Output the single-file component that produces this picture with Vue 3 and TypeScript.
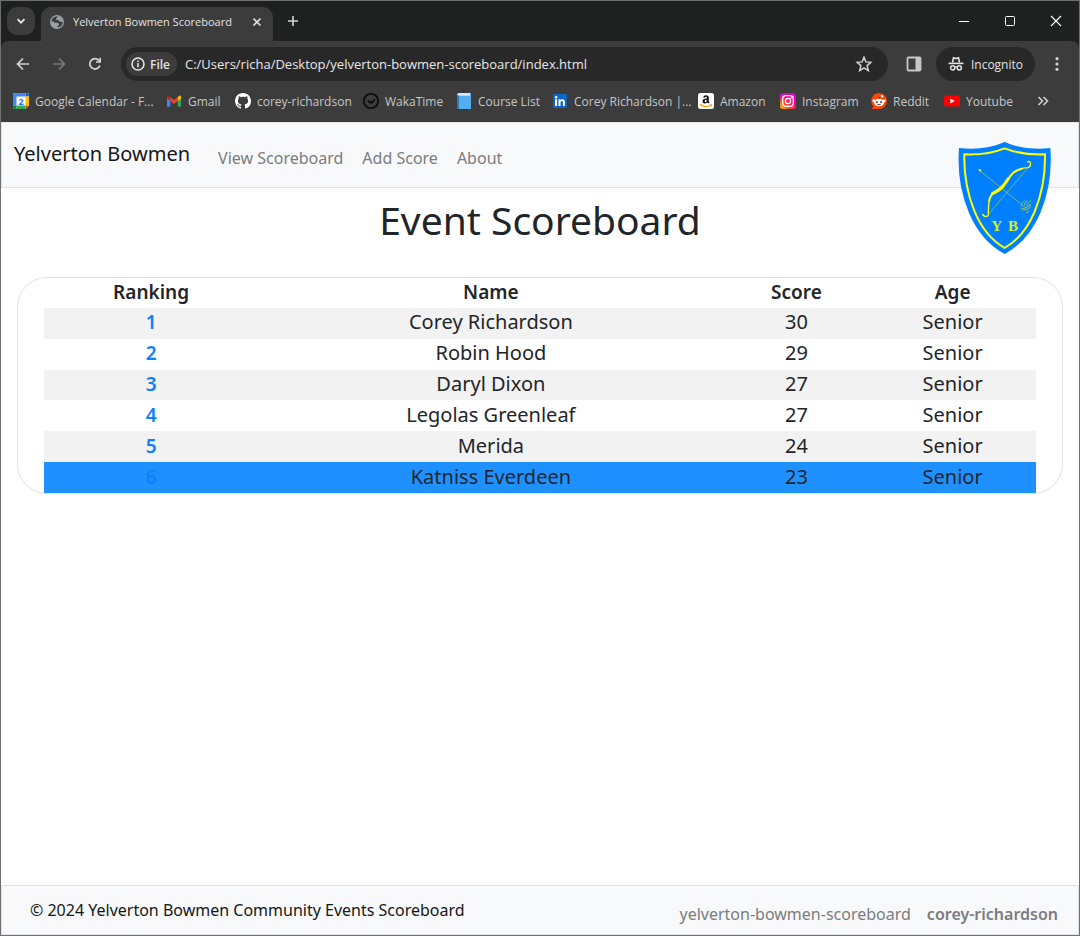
<script setup lang="ts">
import { ref } from 'vue'

interface Bookmark {
  icon: string
  label: string
}

interface Archer {
  name: string
  score: number
  age: string
}

const address = ref('C:/Users/richa/Desktop/yelverton-bowmen-scoreboard/index.html')

const bookmarks: Bookmark[] = [
  { icon: 'calendar', label: 'Google Calendar - F...' },
  { icon: 'gmail', label: 'Gmail' },
  { icon: 'github', label: 'corey-richardson' },
  { icon: 'wakatime', label: 'WakaTime' },
  { icon: 'book', label: 'Course List' },
  { icon: 'linkedin', label: 'Corey Richardson |...' },
  { icon: 'amazon', label: 'Amazon' },
  { icon: 'instagram', label: 'Instagram' },
  { icon: 'reddit', label: 'Reddit' },
  { icon: 'youtube', label: 'Youtube' },
]

const navLinks = ['View Scoreboard', 'Add Score', 'About']

const archers: Archer[] = [
  { name: 'Corey Richardson', score: 30, age: 'Senior' },
  { name: 'Robin Hood', score: 29, age: 'Senior' },
  { name: 'Daryl Dixon', score: 27, age: 'Senior' },
  { name: 'Legolas Greenleaf', score: 27, age: 'Senior' },
  { name: 'Merida', score: 24, age: 'Senior' },
  { name: 'Katniss Everdeen', score: 23, age: 'Senior' },
]
</script>

<template>
  <div class="window">
    <div class="titlebar">
      <button class="tab-search" aria-label="Search tabs">
        <svg width="16" height="16" viewBox="0 0 16 16"><path d="M4.5 6.2 8 9.7l3.500-3.500" fill="none" stroke="#e3e3e3" stroke-width="1.800" /></svg>
      </button>
      <div class="tab">
        <svg width="16" height="16" viewBox="0 0 16 16">
          <circle cx="8" cy="8" r="7" fill="#9aa0a6" />
          <path d="M9 2.600 7.200 4.300v1.600h2.200l1.400 1.800h2.900q.2 3.800-3.500 5.400l-1.700.2v-1.700H10V9.800L8.300 8.700H5.600L4.400 7.500H2.500Q2.700 3.400 6.800 2.500z" fill="#3c3c3c" />
          <path d="M2.600 8.800h2l1.800 1.500v1.500l1.300 1.500q-4-.4-5.100-4.500zM9.300 3l2 .9.900 1.500-2.400.3-1.300-1z" fill="#9aa0a6" />
        </svg>
        <span class="tab-title">Yelverton Bowmen Scoreboard</span>
        <button class="icon-button tab-close" aria-label="Close tab">
          <svg width="16" height="16" viewBox="0 0 16 16"><path d="m4.500 4.500 7 7m0-7-7 7" stroke="#e3e3e3" stroke-width="1.600" /></svg>
        </button>
      </div>
      <button class="icon-button new-tab" aria-label="New tab">
        <svg width="16" height="16" viewBox="0 0 16 16"><path d="M8 3v10M3 8h10" stroke="#d6d6d6" stroke-width="1.600" /></svg>
      </button>
      <div class="window-controls">
        <button class="icon-button" aria-label="Minimize">
          <svg width="12" height="12" viewBox="0 0 12 12"><path d="M1 6.500h10" stroke="#fff" /></svg>
        </button>
        <button class="icon-button" aria-label="Maximize">
          <svg width="12" height="12" viewBox="0 0 12 12"><rect x="1.500" y="1.500" width="9" height="9" rx="1" fill="none" stroke="#fff" /></svg>
        </button>
        <button class="icon-button" aria-label="Close window">
          <svg width="12" height="12" viewBox="0 0 12 12"><path d="m1 1 10 10M11 1 1 11" stroke="#fff" stroke-width="1.200" /></svg>
        </button>
      </div>
    </div>

    <div class="chrome-panel">
      <div class="toolbar">
        <div class="history">
          <button class="icon-button" aria-label="Back">
            <svg width="16" height="16" viewBox="0 0 16 16"><path d="M14 8H3M8 2.500 2.500 8 8 13.500" fill="none" stroke="#d2d2d2" stroke-width="1.700" /></svg>
          </button>
          <button class="icon-button" aria-label="Forward">
            <svg width="16" height="16" viewBox="0 0 16 16"><path d="M2 8h11M8 2.500 13.500 8 8 13.500" fill="none" stroke="#777" stroke-width="1.700" /></svg>
          </button>
          <button class="icon-button" aria-label="Reload">
            <svg width="16" height="16" viewBox="0 0 16 16"><path d="M12.900 9.500A5.200 5.200 0 1 1 12 4.500l1.200 1.400" fill="none" stroke="#d2d2d2" stroke-width="1.800" /><path d="M14 1.800v5H9V5.200h3.300V1.800z" fill="#d2d2d2" /></svg>
          </button>
        </div>
        <div class="omnibox">
          <button class="file-chip">
            <svg width="16" height="16" viewBox="0 0 16 16"><circle cx="8" cy="8" r="6" fill="none" stroke="#e8e8e8" stroke-width="1.500" /><path d="M8 7v4.200M8 4.500v1.600" stroke="#e8e8e8" stroke-width="1.500" /></svg>
            File
          </button>
          <input v-model="address" class="address" type="text" aria-label="Address" />
          <button class="icon-button" aria-label="Bookmark this page">
            <svg width="18" height="18" viewBox="0 0 18 18"><path d="m9 2.200 1.900 4.700 5 .4-3.800 3.300 1.200 5L9 12.900l-4.300 2.700 1.200-5-3.800-3.300 5-.4z" fill="none" stroke="#d2d2d2" stroke-width="1.500" /></svg>
          </button>
        </div>
        <button class="icon-button side-panel" aria-label="Side panel">
          <svg width="16" height="16" viewBox="0 0 16 16"><rect x="1.500" y="1.500" width="13" height="13" rx="1" fill="none" stroke="#c7c7c7" stroke-width="1.800" /><path d="M9.500 1.500h5v13h-5z" fill="#c7c7c7" /></svg>
        </button>
        <button class="incognito">
          <svg width="16" height="16" viewBox="0 0 16 16">
            <path d="M4.500 6.500 5.500 1.800 8 2.600l2.500-.8 1 4.700" fill="none" stroke="#e3e3e3" stroke-width="1.600" />
            <path d="M.5 7.400h15" stroke="#e3e3e3" stroke-width="1.600" />
            <circle cx="4.700" cy="11.800" r="2.100" fill="none" stroke="#e3e3e3" stroke-width="1.500" />
            <circle cx="11.300" cy="11.800" r="2.100" fill="none" stroke="#e3e3e3" stroke-width="1.500" />
            <path d="M6.500 11.300q1.500-.8 3 0" fill="none" stroke="#e3e3e3" stroke-width="1.300" />
          </svg>
          Incognito
        </button>
        <button class="icon-button menu" aria-label="Menu">
          <svg width="16" height="16" viewBox="0 0 16 16" fill="#d2d2d2"><circle cx="8" cy="2.700" r="1.600" /><circle cx="8" cy="8" r="1.600" /><circle cx="8" cy="13.300" r="1.600" /></svg>
        </button>
      </div>

      <nav class="bookmarks" aria-label="Bookmarks">
        <a v-for="item in bookmarks" :key="item.label" class="bookmark" href="#">
          <svg width="16" height="16" viewBox="0 0 16 16">
            <g v-if="item.icon === 'calendar'">
              <path d="M0 0h16v12.500L12.500 16H0z" fill="#fff" />
              <path d="M0 1q0-1 1-1h11.500v3.500h-9v9H0z" fill="#4285f4" />
              <path d="M12.500 0H15q1 0 1 1v2.500h-3.500z" fill="#1967d2" />
              <path d="M12.500 3.500H16v9h-3.500z" fill="#fbbc04" />
              <path d="M3.500 12.500h9V16h-9z" fill="#34a853" />
              <path d="M0 12.500h3.500V16H1q-1 0-1-1z" fill="#188038" />
              <path d="M12.500 12.500H16L12.500 16z" fill="#ea4335" />
              <text x="8" y="11.500" text-anchor="middle" class="calendar-day">2</text>
            </g>
            <g v-else-if="item.icon === 'gmail'">
              <path d="M1 4v9q0 .8.800.8h2.500V7z" fill="#4285f4" />
              <path d="M15 4v9q0 .8-.8.800h-2.500V7z" fill="#34a853" />
              <path d="M11.700 4.200v3.900L15 5.600V4q0-2-1.900-1.200z" fill="#fbbc04" />
              <path d="M4.300 4.200v3.900L1 5.600V4q0-2 1.900-1.200z" fill="#c5221f" />
              <path d="M4.300 4.200 8 7l3.700-2.800v3.900L8 10.900 4.300 8.100z" fill="#ea4335" />
            </g>
            <path v-else-if="item.icon === 'github'" fill="#fff" d="M8 0C3.580 0 0 3.580 0 8c0 3.540 2.290 6.530 5.470 7.590.4.070.55-.17.55-.38 0-.19-.01-.82-.01-1.490-2.010.37-2.530-.49-2.690-.94-.09-.23-.48-.94-.82-1.130-.28-.15-.68-.52-.01-.53.63-.01 1.080.58 1.230.82.72 1.210 1.870.87 2.330.66.070-.52.28-.87.51-1.070-1.780-.2-3.640-.89-3.640-3.950 0-.87.31-1.590.82-2.150-.08-.2-.36-1.020.08-2.120 0 0 .67-.21 2.200.82.64-.18 1.320-.27 2-.27s1.360.09 2 .27c1.530-1.040 2.200-.82 2.200-.82.44 1.100.16 1.920.08 2.120.51.56.82 1.270.82 2.150 0 3.070-1.870 3.750-3.650 3.950.29.25.54.73.54 1.480 0 1.070-.01 1.930-.01 2.200 0 .21.15.46.55.38A8 8 0 0 0 16 8c0-4.420-3.580-8-8-8z" />
            <g v-else-if="item.icon === 'wakatime'" fill="none" stroke="#080808">
              <circle cx="8" cy="8" r="7.200" stroke-width="1.600" />
              <path d="m5 7.300 1.600 2.500L8 8.600l1.100 1.200L11.800 6.300" stroke-width="1.400" />
            </g>
            <g v-else-if="item.icon === 'book'">
              <path d="M1 2q0-2 2-2h11v3H1z" fill="#d5e8f5" />
              <path d="M1 2q1 .8 2.800.8H15V16H3q-2 0-2-2z" fill="#55acee" />
              <path d="M1 2l2 .8V16q-2 0-2-2z" fill="#2b7bb9" />
              <path d="M14 0h1v3h-1z" fill="#55acee" />
            </g>
            <g v-else-if="item.icon === 'linkedin'">
              <rect x="1" y="1" width="14" height="14" rx="1" fill="#0a66c2" />
              <path d="M3.100 6.300h2V13h-2zM6.500 6.300h1.900v.9c.8-1.500 4.500-1.500 4.500 1.700V13h-2V9.500c0-2.200-2.400-2-2.400 0V13h-2z" fill="#fff" />
              <circle cx="4.100" cy="4.200" r="1.200" fill="#fff" />
            </g>
            <g v-else-if="item.icon === 'amazon'">
              <rect width="16" height="16" rx="2.500" fill="#fff" />
              <path d="M5 4.200Q5.800 2.300 8 2.300q2.800 0 2.800 2.500v3.700l.7 1-1.400 1.100-1-1.200Q8 10.600 6.400 10.500 4.500 10.300 4.500 8.200q0-2.400 4.200-2.600c.2-2-.1-1.900-.8-1.900q-.8 0-1 1z" fill="#111" />
              <path d="M8.700 6.800Q6.700 6.700 6.700 8.200c.1 1.600 2 1.200 2-.8z" fill="#fff" />
              <path d="M2 11.300q5.500 4.200 11 1" fill="none" stroke="#f90" stroke-width="1.300" />
              <path d="m11.500 11.600 2.600-.4-.6 2.600z" fill="#f90" />
            </g>
            <g v-else-if="item.icon === 'instagram'">
              <defs>
                <linearGradient id="insta-base" x1="0" y1="1" x2="1" y2="0">
                  <stop offset="0" stop-color="#ffd000" />
                  <stop offset=".3" stop-color="#ff4b20" />
                  <stop offset=".6" stop-color="#ff0085" />
                  <stop offset="1" stop-color="#c800e0" />
                </linearGradient>
                <radialGradient id="insta-corner" cx="0" cy="0" r=".5">
                  <stop offset="0" stop-color="#5b3dff" />
                  <stop offset="1" stop-color="#c800e0" stop-opacity="0" />
                </radialGradient>
              </defs>
              <rect width="16" height="16" rx="3" fill="url(#insta-base)" />
              <rect width="16" height="16" rx="3" fill="url(#insta-corner)" />
              <g fill="none" stroke="#fff" stroke-width="1.300">
                <rect x="2.700" y="2.700" width="10.600" height="10.600" rx="3" />
                <circle cx="8" cy="8" r="2.600" />
              </g>
              <circle cx="11.300" cy="4.700" r=".8" fill="#fff" />
            </g>
            <g v-else-if="item.icon === 'reddit'">
              <path d="M8 0a8 8 0 0 1 0 16H1q-.9 0-.2-.8l1.700-1.700A8 8 0 0 1 8 0z" fill="#ff4500" />
              <ellipse cx="8" cy="9.500" rx="5" ry="3.800" fill="#fff" />
              <circle cx="2.900" cy="7.700" r="1.500" fill="#fff" />
              <circle cx="13.100" cy="7.700" r="1.500" fill="#fff" />
              <circle cx="10.900" cy="3.300" r="1.300" fill="#fff" />
              <path d="M8 6q0-2.500 2.500-2.500" fill="none" stroke="#333" stroke-width=".7" />
              <circle cx="5.900" cy="9" r="1.100" fill="#c92b00" />
              <circle cx="10.100" cy="9" r="1.100" fill="#c92b00" />
              <path d="M5.800 11.200h4.400q-2.200 2-4.400 0z" fill="#222" />
            </g>
            <g v-else>
              <rect y="2.500" width="16" height="11" rx="2.500" fill="#f00" />
              <path d="m6.300 5.500 4.400 2.500-4.400 2.500z" fill="#fff" />
            </g>
          </svg>
          <span>{{ item.label }}</span>
        </a>
        <button class="icon-button" aria-label="More bookmarks">
          <svg width="12" height="12" viewBox="0 0 12 12"><path d="m1.500 2 4 4-4 4m5-8 4 4-4 4" fill="none" stroke="#d2d2d2" stroke-width="1.600" /></svg>
        </button>
      </nav>
    </div>

    <div class="page">
      <header class="navbar">
        <a class="brand" href="#">Yelverton Bowmen</a>
        <nav class="nav-links">
          <a v-for="link in navLinks" :key="link" href="#">{{ link }}</a>
        </nav>
        <svg class="crest" width="93" height="114" viewBox="54 63 279 342" role="img" aria-label="Yelverton Bowmen crest">
          <path d="M57 84Q132 93 194 66q62 27 137 18 8 106-30 195-37 86-107 123-70-37-107-123Q49 190 57 84z" fill="#0080ff" />
          <path d="M73 103q68 3 121-18 53 21 121 18 2 93-31 172-32 76-90 109-58-33-90-109-33-79-31-172z" fill="none" stroke="#ff0" stroke-width="6" />
          <g fill="none" stroke="#ff0" stroke-linecap="round">
            <path d="M117 150 258 264M146 282 262 146" stroke="#9fd34a" stroke-width="2" />
            <path d="M128 283q5 10 15 5 4-3 2-11 0-18 3-39" stroke-width="4" />
            <path d="M148 242q2-16 15-25 19-10 30-24l17-23q13-19 36-24" stroke-width="6" />
            <path d="M158 220q22-9 34-25l13-19" stroke-width="9" />
            <path d="M239 147q18-4 25-4 10-5 7-15-4-6-8-2" stroke-width="4" />
            <path d="m244 266 14-2 12-8m-22 15 14-2 10-8m-13 17 8-4m-24-14 3-10 8-8m-1 14 2-8 8-6m-2 16 2-9 9-7m-3 17 2-8" stroke="#b9df35" stroke-width="2" />
          </g>
          <path d="m114 147 11 2-4 7z" fill="#ff0" />
          <text x="170" y="333" text-anchor="middle" class="crest-letter">Y</text>
          <text x="219" y="333" text-anchor="middle" class="crest-letter">B</text>
        </svg>
      </header>

      <main class="content">
        <h1>Event Scoreboard</h1>
        <div class="board">
          <table>
            <colgroup>
              <col class="col-ranking" />
              <col class="col-name" />
              <col class="col-score" />
              <col class="col-age" />
            </colgroup>
            <thead>
              <tr>
                <th scope="col">Ranking</th>
                <th scope="col">Name</th>
                <th scope="col">Score</th>
                <th scope="col">Age</th>
              </tr>
            </thead>
            <tbody>
              <tr v-for="(archer, index) in archers" :key="archer.name" :class="{ active: index === 5 }">
                <th scope="row">{{ index + 1 }}</th>
                <td>{{ archer.name }}</td>
                <td>{{ archer.score }}</td>
                <td>{{ archer.age }}</td>
              </tr>
            </tbody>
          </table>
        </div>
      </main>

      <footer class="footer">
        <span>© 2024 Yelverton Bowmen Community Events Scoreboard</span>
        <nav class="footer-links">
          <a href="#">yelverton-bowmen-scoreboard</a>
          <a class="author" href="#">corey-richardson</a>
        </nav>
      </footer>
    </div>
  </div>
</template>

<style>
body {
  margin: 0;
}
</style>

<style scoped>
.window {
  box-sizing: border-box;
  min-height: 100vh;
  display: flex;
  flex-direction: column;
  border: 1px solid #707070;
  background: #1f2120;
  font-family: "Open Sans", "Noto Sans", sans-serif;
  font-size: 12px;
  color: #e3e3e3;
}

button {
  border: 0;
  padding: 0;
  background: none;
  color: inherit;
  font: inherit;
}

a {
  color: inherit;
  text-decoration: none;
}

svg {
  display: block;
  flex: none;
}

.icon-button {
  display: flex;
  align-items: center;
  justify-content: center;
}

.titlebar {
  display: flex;
  align-items: center;
  height: 40px;
  padding-left: 6px;
}

.tab-search {
  display: flex;
  align-items: center;
  justify-content: center;
  width: 28px;
  height: 28px;
  border-radius: 10px;
  background: #3c3c3c;
}

.tab {
  box-sizing: border-box;
  align-self: flex-end;
  display: flex;
  align-items: center;
  gap: 8px;
  width: 232px;
  height: 34px;
  margin-left: 6px;
  padding: 0 8px 5px;
  border-radius: 10px 10px 0 0;
  background: #3c3c3c;
}

.tab-title {
  flex: 1;
  min-width: 0;
  overflow: hidden;
  white-space: nowrap;
  font-size: 11px;
}

.new-tab {
  margin-left: 12px;
}

.window-controls {
  display: flex;
  gap: 34px;
  margin-left: auto;
  padding-right: 17px;
}

.chrome-panel {
  border-radius: 8px 8px 0 0;
  background: #3c3c3c;
}

.toolbar {
  display: flex;
  align-items: center;
  padding: 6px 14px;
}

.history {
  display: flex;
  gap: 20px;
  margin-right: 18px;
}

.omnibox {
  flex: 1;
  display: flex;
  align-items: center;
  height: 34px;
  padding: 0 15px 0 5px;
  border-radius: 17px;
  background: #282828;
}

.file-chip {
  display: flex;
  align-items: center;
  gap: 4px;
  height: 24px;
  padding: 0 7px 0 4px;
  border-radius: 12px;
  background: #3c3c3c;
  font-weight: 600;
}

.address {
  flex: 1;
  min-width: 0;
  border: 0;
  padding: 0 0 0 8px;
  outline: 0;
  background: none;
  color: #e8e8e8;
  font-family: inherit;
  font-size: 13px;
}

.side-panel {
  margin: 0 14px 0 18px;
}

.incognito {
  display: flex;
  align-items: center;
  gap: 7px;
  height: 34px;
  padding: 0 12px;
  border-radius: 17px;
  background: #282828;
}

.menu {
  margin-left: 14px;
}

.bookmarks {
  display: grid;
  grid-template-columns: 153fr 69fr 128fr 93fr 96fr 146fr 82fr 91fr 73fr 93fr 12fr;
  align-items: center;
  height: 28px;
  padding: 0 30px 7px 12px;
}

.bookmark {
  display: flex;
  align-items: center;
  gap: 6px;
  color: #c7c7c7;
  white-space: nowrap;
}

.calendar-day {
  fill: #1a73e8;
  font-size: 9px;
  font-weight: 700;
}

.page {
  flex: 1;
  display: flex;
  flex-direction: column;
  border-top: 1px solid #e8e8e8;
  background: #fff;
  color: #212529;
  font-family: "Noto Sans", sans-serif;
  font-size: 16px;
}

.navbar {
  position: relative;
  display: flex;
  align-items: center;
  height: 64px;
  padding: 0 12px;
  border: 1px solid #dee2e6;
  border-top: 0;
  background: #f8f9fa;
}

.brand {
  padding-bottom: 4px;
  color: #161616;
  font-size: 20px;
}

.nav-links {
  display: flex;
  gap: 19px;
  margin-left: 28px;
  padding-top: 6px;
  color: #7b7c7d;
}

.crest {
  position: absolute;
  top: 18px;
  right: 27px;
}

.content {
  flex: 1;
  padding: 8px 16px;
}

h1 {
  margin: 0;
  font-size: 39px;
  font-weight: 400;
  line-height: 48px;
  text-align: center;
}

.board {
  margin-top: 33px;
  padding: 0 26px;
  border: 1px solid #dee2e6;
  border-radius: 30px;
}

table {
  width: 100%;
  height: 215px;
  border-collapse: collapse;
  table-layout: fixed;
  font-size: 20px;
  line-height: 28px;
  text-align: center;
}

.col-ranking {
  width: 21.6%;
}

.col-name {
  width: 46.9%;
}

.col-score {
  width: 14.7%;
}

.col-age {
  width: 16.8%;
}

th,
td {
  padding: 0 1px 2px;
}

th {
  font-size: 19px;
  font-weight: 600;
}

tbody tr:nth-child(odd) {
  background: #f2f2f2;
}

tbody th {
  color: #0d80ff;
}

tbody tr.active {
  background: #1e90ff;
}

.footer {
  display: flex;
  align-items: center;
  justify-content: space-between;
  height: 48px;
  padding: 0 20px 0 28px;
  border: 1px solid #dee2e6;
  background: #f8f9fa;
  color: #161616;
}

.footer-links {
  display: flex;
  gap: 16px;
  padding-top: 8px;
  color: #7b7c7d;
}

.author {
  font-weight: 600;
}

.crest-letter {
  fill: #d8ee20;
  font-family: "Liberation Serif", serif;
  font-size: 45px;
  font-weight: 700;
}
</style>
